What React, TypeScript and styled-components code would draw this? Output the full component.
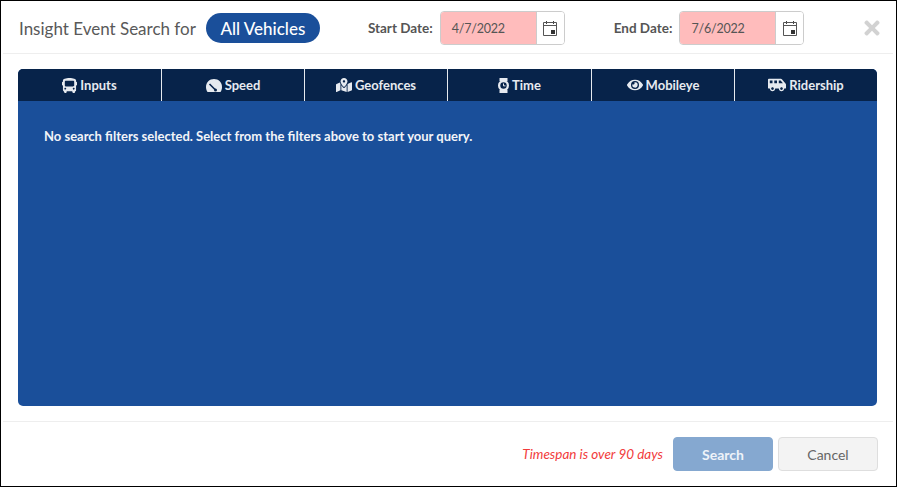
import React from 'react'
import styled, { createGlobalStyle } from 'styled-components'
import { FaBus, FaEye, FaMapMarkedAlt, FaShuttleVan, FaTimes } from 'react-icons/fa'

const GlobalStyle = createGlobalStyle`
	html, body {
		margin: 0;
		padding: 0;
		background: #fff;
	}
	* {
		box-sizing: border-box;
	}
`

const Dialog = styled.div`
	display: flex;
	flex-direction: column;
	width: 897px;
	height: 487px;
	background: #fff;
	border: 1px solid #000;
	font-family: "Lato", "Noto Sans", sans-serif;
	overflow: hidden;
`

const Header = styled.header`
	display: flex;
	align-items: center;
	height: 53px;
	margin: 0 3px 0 2px;
	padding: 2px 10px 0 16px;
	border-bottom: 1px solid #eeeeee;
`

const Title = styled.h1`
	margin: 0;
	font-size: 17px;
	font-weight: 400;
	color: #595959;
	white-space: nowrap;
`

const VehiclePill = styled.span`
	display: inline-flex;
	align-items: center;
	justify-content: center;
	width: 114px;
	height: 30px;
	margin-left: 10px;
	border-radius: 15px;
	background: #1a4f9a;
	color: #fff;
	font-size: 17px;
	font-weight: 500;
`

const DateLabel = styled.label<{ $gap: number }>`
	margin-left: ${p => p.$gap}px;
	margin-right: 7px;
	font-size: 13.5px;
	font-weight: 700;
	color: #555;
	white-space: nowrap;
`

const DateField = styled.div`
	display: flex;
	width: 125px;
	height: 34px;
	border: 1px solid #ccc;
	border-radius: 4px;
	overflow: hidden;
`

const DateValue = styled.div`
	display: flex;
	align-items: center;
	flex: 1;
	padding-left: 11px;
	background: #ffbcbc;
	font-size: 12.5px;
	letter-spacing: -0.2px;
	color: #555;
`

const CalendarButton = styled.div`
	display: flex;
	align-items: center;
	justify-content: center;
	width: 28px;
	background: #fff;
	border-left: 1px solid #ccc;
`

const CloseButton = styled.button`
	display: flex;
	margin-left: auto;
	padding: 0;
	border: 0;
	background: none;
	color: #d2d2d2;
	font-size: 22px;
`

const Body = styled.main`
	flex: 1;
	padding: 15px 19px 15px 17px;
`

const Panel = styled.section`
	display: flex;
	flex-direction: column;
	height: 337px;
	border-radius: 5px;
	background: #1a4f9a;
	overflow: hidden;
`

const Tabs = styled.nav`
	display: grid;
	grid-template-columns: 143px 143px 143px 144px 143px 143px;
	height: 32px;
	background: #07234a;
`

const Tab = styled.div`
	display: flex;
	align-items: center;
	justify-content: center;
	gap: 3px;
	color: #e6eaf0;
	font-size: 13px;
	font-weight: 700;
	& + & {
		border-left: 1px solid #e6e9ee;
	}
	svg {
		flex: none;
	}
`

const EmptyMessage = styled.p`
	margin: 27px 0 0 26px;
	color: #f2f4f8;
	font-size: 13px;
	font-weight: 700;
`

const Footer = styled.footer`
	display: flex;
	align-items: center;
	justify-content: flex-end;
	height: 65px;
	margin: 0 3px 0 2px;
	padding: 0 15px 0 0;
	border-top: 1px solid #eeeeee;
`

const Warning = styled.span`
	margin-right: 10px;
	color: #f23b3b;
	font-size: 13.5px;
	font-style: italic;
`

const Button = styled.button<{ $primary?: boolean }>`
	width: 100px;
	height: 34px;
	margin-left: ${p => (p.$primary ? 0 : 5)}px;
	border: 1px solid ${p => (p.$primary ? '#85a8d0' : '#dedede')};
	border-radius: 4px;
	background: ${p => (p.$primary ? '#85a8d0' : '#f3f3f3')};
	color: ${p => (p.$primary ? '#eef3f9' : '#666')};
	font-family: inherit;
	font-size: 14px;
	font-weight: ${p => (p.$primary ? 700 : 400)};
`

const CalendarIcon = () => (
	<svg width="14" height="15" viewBox="0 0 14 15">
		<path d="M3.5 0v3M10.5 0v3" stroke="#444" strokeWidth="1" fill="none" />
		<path d="M0.5 1.5h13v13H0.5zM0.5 4.5h13" stroke="#555" strokeWidth="1" fill="none" />
		<rect x="8" y="9" width="4" height="4" fill="#333" />
	</svg>
)

const GaugeIcon = () => (
	<svg width="16" height="13" viewBox="0 0 16 13">
		<path
			fill="currentColor"
			d="M8 0C3.4 0 0 3.5 0 8c0 1.9.6 3.7 1.5 5h13c.9-1.3 1.5-3.1 1.5-5 0-4.5-3.4-8-8-8z"
		/>
		<path d="M3.5 5l5.5 5.5" stroke="#07234a" strokeWidth="1.6" />
		<circle cx="9.5" cy="11" r="1.5" fill="#07234a" />
	</svg>
)

const WatchIcon = () => (
	<svg width="11" height="15" viewBox="0 0 11 15">
		<path fill="currentColor" d="M1.5 0h8v3h-8zM1.5 12h8v3h-8z" />
		<circle cx="5.5" cy="7.5" r="5.5" fill="currentColor" />
		<circle cx="5.5" cy="7.5" r="3.2" fill="#07234a" />
		<path d="M5.5 5.5v2.4h2" stroke="currentColor" strokeWidth="1" fill="none" />
	</svg>
)

const App = () => (
	<>
		<GlobalStyle />
		<Dialog>
			<Header>
				<Title>Insight Event Search for</Title>
				<VehiclePill>All Vehicles</VehiclePill>
				<DateLabel $gap={48}>Start Date:</DateLabel>
				<DateField>
					<DateValue>4/7/2022</DateValue>
					<CalendarButton><CalendarIcon /></CalendarButton>
				</DateField>
				<DateLabel $gap={49}>End Date:</DateLabel>
				<DateField>
					<DateValue>7/6/2022</DateValue>
					<CalendarButton><CalendarIcon /></CalendarButton>
				</DateField>
				<CloseButton aria-label="Close"><FaTimes /></CloseButton>
			</Header>
			<Body>
				<Panel>
					<Tabs>
						<Tab><FaBus size={15} />Inputs</Tab>
						<Tab><GaugeIcon />Speed</Tab>
						<Tab><FaMapMarkedAlt size={16} />Geofences</Tab>
						<Tab><WatchIcon />Time</Tab>
						<Tab><FaEye size={16} />Mobileye</Tab>
						<Tab><FaShuttleVan size={18} />Ridership</Tab>
					</Tabs>
					<EmptyMessage>No search filters selected. Select from the filters above to start your query.</EmptyMessage>
				</Panel>
			</Body>
			<Footer>
				<Warning>Timespan is over 90 days</Warning>
				<Button $primary>Search</Button>
				<Button>Cancel</Button>
			</Footer>
		</Dialog>
	</>
)

export default App
